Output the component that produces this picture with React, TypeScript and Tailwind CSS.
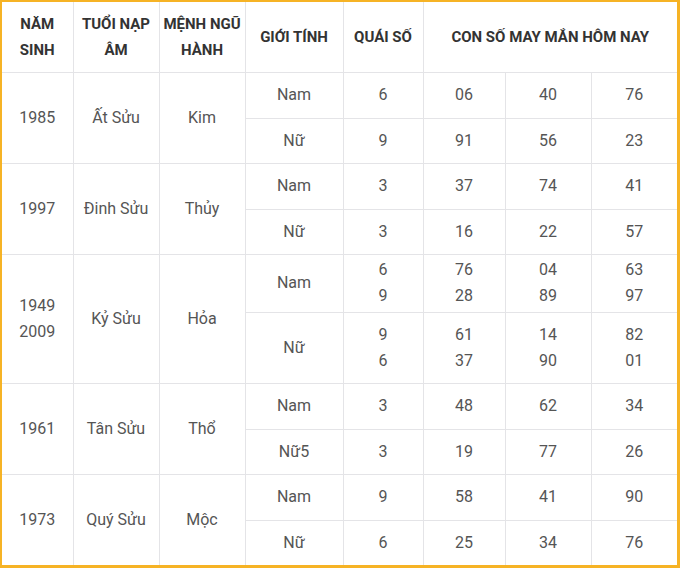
import * as React from 'react';

type Sub = { gender: string; quai: string[]; nums: string[][]; h: string };
type Group = { years: string[]; tuoi: string; menh: string; subs: Sub[] };

const groups: Group[] = [
  {
    years: ['1985'], tuoi: 'Ất Sửu', menh: 'Kim',
    subs: [
      { gender: 'Nam', quai: ['6'], nums: [['06'], ['40'], ['76']], h: 'h-[46px]' },
      { gender: 'Nữ', quai: ['9'], nums: [['91'], ['56'], ['23']], h: 'h-[45px]' },
    ],
  },
  {
    years: ['1997'], tuoi: 'Đinh Sửu', menh: 'Thủy',
    subs: [
      { gender: 'Nam', quai: ['3'], nums: [['37'], ['74'], ['41']], h: 'h-[46px]' },
      { gender: 'Nữ', quai: ['3'], nums: [['16'], ['22'], ['57']], h: 'h-[45px]' },
    ],
  },
  {
    years: ['1949', '2009'], tuoi: 'Kỷ Sửu', menh: 'Hỏa',
    subs: [
      { gender: 'Nam', quai: ['6', '9'], nums: [['76', '28'], ['04', '89'], ['63', '97']], h: 'h-[58px]' },
      { gender: 'Nữ', quai: ['9', '6'], nums: [['61', '37'], ['14', '90'], ['82', '01']], h: 'h-[71px]' },
    ],
  },
  {
    years: ['1961'], tuoi: 'Tân Sửu', menh: 'Thổ',
    subs: [
      { gender: 'Nam', quai: ['3'], nums: [['48'], ['62'], ['34']], h: 'h-[46px]' },
      { gender: 'Nữ5', quai: ['3'], nums: [['19'], ['77'], ['26']], h: 'h-[45px]' },
    ],
  },
  {
    years: ['1973'], tuoi: 'Quý Sửu', menh: 'Mộc',
    subs: [
      { gender: 'Nam', quai: ['9'], nums: [['58'], ['41'], ['90']], h: 'h-[46px]' },
      { gender: 'Nữ', quai: ['6'], nums: [['25'], ['34'], ['76']], h: 'h-[45px]' },
    ],
  },
];

function Lines({ items }: { items: string[] }) {
  return (
    <>
      {items.map((t, i) => (
        <div key={i}>{t}</div>
      ))}
    </>
  );
}

export default function App() {
  const td = 'border border-[#e4e4e7] text-center align-middle p-0';
  const th = 'border border-[#e4e4e7] text-center align-middle p-0 font-bold text-[15px] text-[#333]';
  return (
    <div className="w-[680px] h-[568px] bg-white border-[#f6b325] border-l-2 border-t-2 border-r-[3px] border-b-[3px] overflow-hidden">
      <table
        className="table-fixed border-collapse w-[675px] text-[16px] leading-[26px] text-[#555] border-hidden"
        style={{ fontFamily: 'Roboto, "Noto Sans", sans-serif' }}
      >
        <colgroup>
          <col className="w-[71px]" />
          <col className="w-[86px]" />
          <col className="w-[86px]" />
          <col className="w-[98px]" />
          <col className="w-[80px]" />
          <col className="w-[82px]" />
          <col className="w-[86px]" />
          <col className="w-[86px]" />
        </colgroup>
        <thead>
          <tr className="h-[70px]">
            <th className={th}>NĂM<br />SINH</th>
            <th className={th}>TUỔI NẠP<br />ÂM</th>
            <th className={th}>MỆNH NGŨ<br />HÀNH</th>
            <th className={th}>GIỚI TÍNH</th>
            <th className={th}>QUÁI SỐ</th>
            <th className={th} colSpan={3}>CON SỐ MAY MẮN HÔM NAY</th>
          </tr>
        </thead>
        <tbody>
          {groups.map((g) =>
            g.subs.map((s, si) => (
              <tr key={g.tuoi + si} className={s.h}>
                {si === 0 && (
                  <>
                    <td className={td} rowSpan={2}><Lines items={g.years} /></td>
                    <td className={td} rowSpan={2}>{g.tuoi}</td>
                    <td className={td} rowSpan={2}>{g.menh}</td>
                  </>
                )}
                <td className={td}>{s.gender}</td>
                <td className={td}><Lines items={s.quai} /></td>
                {s.nums.map((n, ni) => (
                  <td key={ni} className={td}><Lines items={n} /></td>
                ))}
              </tr>
            ))
          )}
        </tbody>
      </table>
    </div>
  );
}
